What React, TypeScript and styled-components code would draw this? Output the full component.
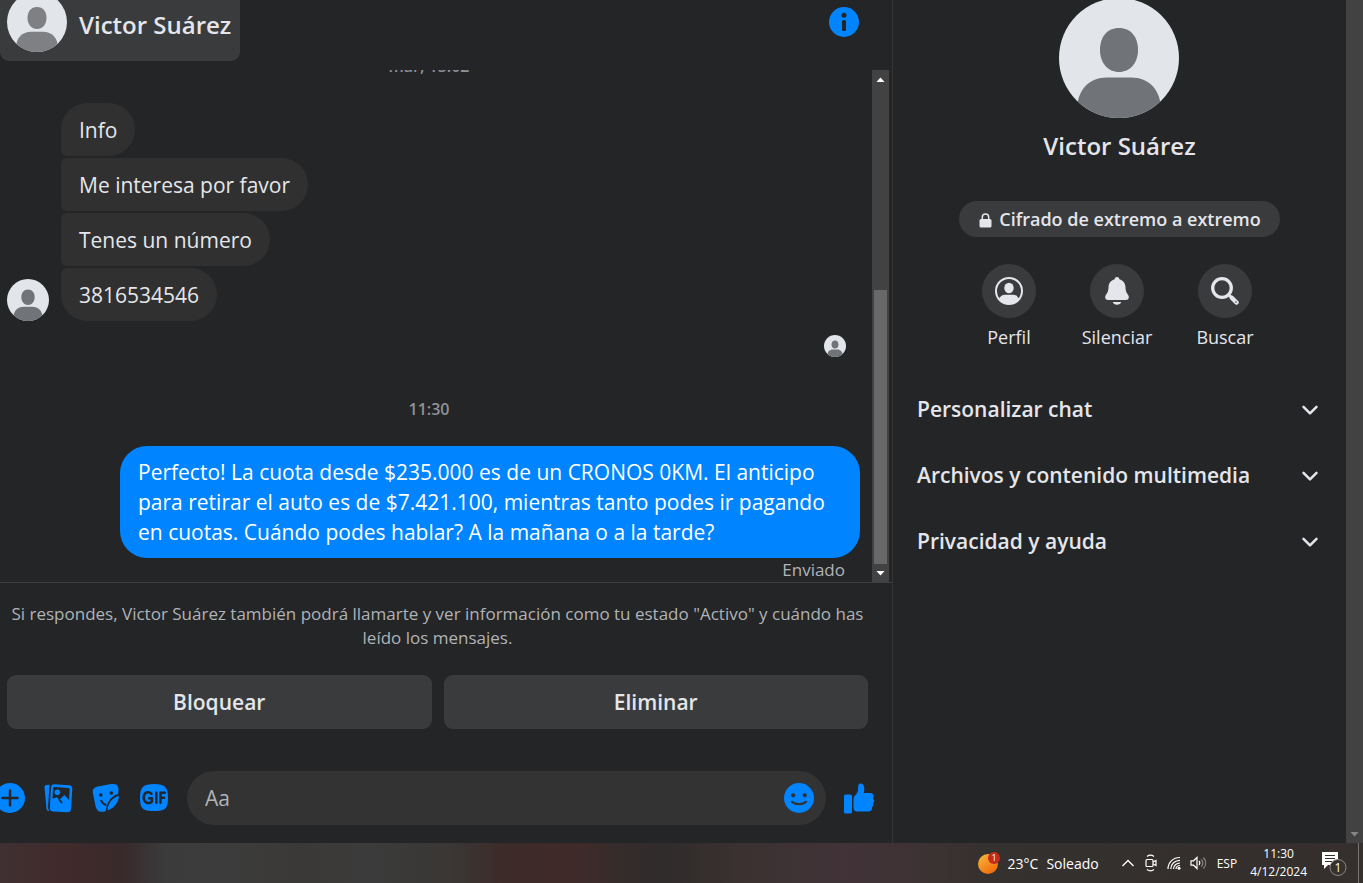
import React from "react";
import styled, { createGlobalStyle } from "styled-components";

const Global = createGlobalStyle`
  *, *::before, *::after { box-sizing: border-box; }
  html, body, #root { height: 100%; }
  body {
    margin: 0;
    background: #242526;
    color: #e4e6eb;
    font-family: "Open Sans", "Noto Sans", sans-serif;
    overflow: hidden;
  }
  button { font: inherit; color: inherit; border: 0; background: none; padding: 0; cursor: pointer; }
  h1, h2, p, ul { margin: 0; padding: 0; }
  ul { list-style: none; }
  svg { display: block; flex: none; }
`;

const Screen = styled.div`
  display: flex;
  flex-direction: column;
  min-height: 100vh;
`;

const Workspace = styled.div`
  display: flex;
  flex: 1;
  min-height: 0;
`;

const Chat = styled.main`
  display: flex;
  flex-direction: column;
  flex: 1;
  min-width: 0;
  border-right: 1px solid #323436;
`;

const ChatHeader = styled.header`
  display: flex;
  align-items: flex-start;
  justify-content: space-between;
  height: 70px;
  padding-right: 33px;
  overflow: hidden;
`;

const Contact = styled.button`
  display: flex;
  align-items: flex-start;
  gap: 12px;
  height: 61px;
  padding: 0 9px 0 7px;
  border-radius: 0 0 9px 9px;
  background: #3a3b3c;
`;

const ContactAvatar = styled.span`
  margin-top: -8px;
`;

const ContactName = styled.h1`
  font-size: 24px;
  line-height: 50px;
  font-weight: 600;
`;

const InfoButton = styled.button`
  margin-top: 7px;
`;

const MessageArea = styled.section`
  display: flex;
  flex: 1 1 0;
  min-height: 0;
  padding-right: 3px;
`;

const Messages = styled.div`
  display: flex;
  flex-direction: column;
  justify-content: flex-end;
  flex: 1;
  min-width: 0;
  overflow: hidden;
  padding-right: 12px;
`;

const Stamp = styled.time`
  flex: none;
  padding-right: 2px;
  text-align: center;
  font-size: 16px;
  line-height: 24px;
  font-weight: 600;
  color: #8f9297;
`;

const Incoming = styled.div`
  display: flex;
  flex: none;
  align-items: flex-end;
  gap: 12px;
  margin-top: 25px;
  padding-left: 7px;
`;

const BubbleList = styled.ul`
  display: flex;
  flex-direction: column;
  align-items: flex-start;
  gap: 2px;
`;

const Bubble = styled.li`
  padding: 12px 18px 11px;
  border-radius: 6px 27px 27px 6px;
  background: #303030;
  font-size: 21px;
  line-height: 30px;

  &:first-child { border-top-left-radius: 27px; }
  &:last-child { border-bottom-left-radius: 27px; }
`;

const Seen = styled.div`
  display: flex;
  flex: none;
  justify-content: flex-end;
  margin: 14px 14px 40px 0;
`;

const OwnBubble = styled.p`
  flex: none;
  align-self: flex-end;
  max-width: 740px;
  margin-top: 25px;
  padding: 11px 18px;
  border-radius: 27px;
  background: #0084ff;
  color: #fff;
  font-size: 21px;
  line-height: 30px;
`;

const Status = styled.p`
  flex: none;
  padding-right: 15px;
  text-align: right;
  font-size: 17px;
  line-height: 24px;
  color: #b0b3b8;
`;

const Track = styled.div`
  display: flex;
  flex-direction: column;
  align-items: center;
  width: 17px;
  background: #424242;
`;

const TrackEnd = styled.span`
  display: flex;
  flex: none;
  align-items: center;
  justify-content: center;
  width: 17px;
  height: 18px;
`;

const Thumb = styled.span`
  width: 13px;
  height: 274px;
  margin-top: auto;
  background: #686868;
`;

const RequestBar = styled.section`
  padding: 19px 24px 18px 7px;
  border-top: 1px solid #3e4042;
`;

const Notice = styled.p`
  text-align: center;
  font-size: 17px;
  line-height: 24px;
  color: #b0b3b8;
`;

const Choices = styled.div`
  display: flex;
  gap: 12px;
  margin-top: 25px;
`;

const Choice = styled.button`
  flex: 1;
  height: 54px;
  border-radius: 9px;
  background: #3a3b3c;
  font-size: 21px;
  font-weight: 600;
`;

const Composer = styled.form`
  display: flex;
  align-items: center;
  gap: 18px;
  height: 54px;
  margin: 42px -7px 0 -12px;
`;

const Tools = styled.div`
  display: flex;
  gap: 18px;
`;

const Field = styled.div`
  display: flex;
  flex: 1;
  align-items: center;
  min-width: 0;
  height: 54px;
  padding: 0 12px 0 18px;
  border-radius: 27px;
  background: #333334;
`;

const MessageInput = styled.input`
  flex: 1;
  min-width: 0;
  padding: 0;
  border: 0;
  outline: 0;
  background: transparent;
  color: #e4e6eb;
  font: inherit;
  font-size: 21px;
  &::placeholder { color: #b0b3b8; opacity: 1; }
`;

const Details = styled.aside`
  display: flex;
  flex-direction: column;
  align-items: center;
  width: 453px;
`;

const ProfileAvatar = styled.div`
  margin: -2px 2px 0 0;
`;

const ProfileName = styled.h2`
  margin-top: 11px;
  font-size: 24px;
  line-height: 34px;
  font-weight: 600;
`;

const Encryption = styled.button`
  display: flex;
  align-items: center;
  gap: 7px;
  height: 36px;
  margin-top: 38px;
  padding: 0 19px 0 20px;
  border-radius: 18px;
  background: #3a3b3c;
  font-size: 18px;
  font-weight: 600;
`;

const Actions = styled.div`
  display: flex;
  margin: 27px 5px 0 0;
`;

const Action = styled.button`
  display: flex;
  flex-direction: column;
  align-items: center;
  gap: 5px;
  width: 108px;
  font-size: 18px;
  line-height: 28px;
`;

const ActionDisc = styled.span`
  display: flex;
  align-items: center;
  justify-content: center;
  width: 54px;
  height: 54px;
  border-radius: 50%;
  background: #3a3b3c;
`;

const Sections = styled.div`
  align-self: stretch;
  margin-top: 25px;
  padding: 0 27px 0 24px;
`;

const Section = styled.button`
  display: flex;
  align-items: center;
  justify-content: space-between;
  width: 100%;
  height: 66px;
  font-size: 21px;
  font-weight: 600;
`;

const PageTrack = styled.div`
  display: flex;
  flex-direction: column;
  justify-content: flex-end;
  width: 17px;
  background: #424242;
`;

const Taskbar = styled.footer`
  display: flex;
  align-items: center;
  justify-content: flex-end;
  flex: none;
  height: 40px;
  color: #fff;
  font-size: 14px;
  background: linear-gradient(
    90deg,
    #403031 0%, #402a2c 5%, #38292a 9%, #3b3b3c 12%, #3c3c3c 16%, #3b3937 22%, #3b3b3b 27%,
    #3a3735 33%, #3c2b29 37%, #402a29 42%, #332c2b 46%, #2f2c2b 49%, #3a3130 54%, #413338 62%,
    #3d3233 68%, #35312e 72%, #34302e 82%, #352f2d 100%
  );
`;

const Weather = styled.button`
  display: flex;
  align-items: center;
  gap: 8px;
  margin-right: 22px;
`;

const Tray = styled.div`
  display: flex;
  align-items: center;
  gap: 9px;
`;

const Language = styled.button`
  margin-left: 10px;
  font-size: 12px;
`;

const Clock = styled.time`
  margin: 0 15px 0 13px;
  text-align: center;
  font-size: 12px;
  line-height: 18px;
`;

const Desktop = styled.span`
  width: 1px;
  height: 40px;
  margin: 0 4px 0 11px;
  background: #77736f;
`;

function Avatar({ size, figure = "#707377" }: { size: number; figure?: string }) {
  return (
    <svg width={size} height={size} viewBox="0 0 60 60" aria-hidden="true">
      <defs>
        <clipPath id={`face${size}`}><circle cx="30" cy="30" r="30" /></clipPath>
      </defs>
      <g clipPath={`url(#face${size})`}>
        <rect width="60" height="60" fill="#e2e5ea" />
        <path d="M30 15c6 0 9.500 4.500 9.500 11S35.500 37 30 37s-9.500-4.500-9.500-11S24 15 30 15Z" fill={figure} />
        <path d="M9 56c0-10 6-16.300 15-16.300h12c9 0 15 6.300 15 16.300v4H9Z" fill={figure} />
      </g>
    </svg>
  );
}

const Arrow = ({ up, color = "#fff" }: { up?: boolean; color?: string }) => (
  <svg width="9" height="5" viewBox="0 0 9 5" aria-hidden="true">
    <path d={up ? "M0.500 5 4.500 0.500 8.500 5Z" : "M0.500 0 4.500 4.500 8.500 0Z"} fill={color} />
  </svg>
);

const Chevron = () => (
  <svg width="18" height="18" viewBox="0 0 18 18" fill="none" stroke="#e4e6eb" strokeWidth="2.500" strokeLinecap="round" strokeLinejoin="round" aria-hidden="true">
    <path d="m2.500 6.800 6.500 6.500L15.500 6.800" />
  </svg>
);

const InfoIcon = () => (
  <svg width="30" height="30" viewBox="0 0 30 30" aria-hidden="true">
    <circle cx="15" cy="15" r="15" fill="#0084ff" />
    <circle cx="15" cy="8.200" r="2.500" fill="#242526" />
    <rect x="13" y="13" width="4" height="11" rx="1.500" fill="#242526" />
  </svg>
);

const PlusIcon = () => (
  <svg width="30" height="30" viewBox="0 0 30 30" aria-hidden="true">
    <circle cx="15" cy="15" r="15" fill="#0084ff" />
    <path d="M15 7.500v15M7.500 15h15" stroke="#242526" strokeWidth="2.500" strokeLinecap="round" />
  </svg>
);

const PhotosIcon = () => (
  <svg width="30" height="30" viewBox="0 0 30 30" aria-hidden="true">
    <path d="M6.500 1.600 3.500 1.900C2 2.100 1.300 3 1.500 4.500l2 21.300c.2 1.600 1.100 2.300 2.700 2.200h.3C5.500 27 5 25.500 5.100 23.800Z" fill="#0084ff" />
    <path d="M11.500 1.200 26 2.300c2.300.2 3.500 1.500 3.300 3.800l-1.300 20c-.2 2.300-1.500 3.400-3.800 3.200L10 28.400c-2.300-.2-3.400-1.500-3.200-3.800l1.200-20C8.200 2.200 9.400 1.100 11.500 1.200Z" fill="#0084ff" />
    <path d="m9.500 15.400.6-9.900c.1-1 .6-1.500 1.600-1.400l13.600.9c1 .1 1.500.6 1.400 1.600L26.100 17l-3.700-4.100c-.6-.7-1.200-.7-1.800-.1l-4.200 4-2-2c-.6-.6-1.200-.6-1.800 0Z" fill="#242526" />
    <path d="m16.400 16.800 2.200 2.700" stroke="#242526" strokeWidth="1.800" strokeLinecap="round" />
    <circle cx="14.400" cy="9.300" r="2.800" fill="#0084ff" />
  </svg>
);

const StickerIcon = () => (
  <svg width="30" height="30" viewBox="0 0 30 30" aria-hidden="true">
    <path d="M7 3.500 20 1.100c5-.8 7.500 1.200 7.500 5 0 1.500-.1 3.200-.4 5C22.500 12.500 19 15.500 16.800 20c-1.100 2.400-1.700 5-1.900 7.900-2.400 1.300-6.600 1.100-8.400-.700-1.200-1.300-1.800-3.200-2.300-5.700L1.800 9.500C1.200 6 3.500 4 7 3.500Z" fill="#0084ff" />
    <path d="M28 12.700c-.2 3.800-1.700 7.300-4.200 10-2 2.100-4.400 3.600-7.200 4.700.2-7.200 4.400-12.700 11.400-14.700Z" fill="#0084ff" />
    <circle cx="9.800" cy="12" r="1.800" fill="#242526" />
    <circle cx="20.300" cy="10" r="1.800" fill="#242526" />
    <path d="M10.200 17.700c1 2.200 2.300 3.500 4.500 4" fill="none" stroke="#242526" strokeWidth="2" strokeLinecap="round" />
  </svg>
);

const GifIcon = () => (
  <svg width="30" height="30" viewBox="0 0 30 30" aria-hidden="true">
    <path d="M15 1c11 0 14 3 14 14s-3 13-14 13S1 26 1 15 4 1 15 1Z" fill="#0084ff" />
    <g fill="none" stroke="#242526" strokeWidth="2.500" strokeLinecap="round" strokeLinejoin="round">
      <path d="M12.500 10.700C8.800 7.500 4.700 10 4.700 14.500c0 5 4.800 7 8.200 4.200v-3.500h-2.700" />
      <path d="M17.300 9.700v10M21.500 19.700v-10h4.300M21.500 14.700h3.600" />
    </g>
  </svg>
);

const SmileIcon = () => (
  <svg width="30" height="30" viewBox="0 0 30 30" aria-hidden="true">
    <circle cx="15" cy="15" r="15" fill="#0084ff" />
    <circle cx="9.200" cy="12.300" r="2.100" fill="#333334" />
    <circle cx="20.800" cy="12.300" r="2.100" fill="#333334" />
    <path d="M8 18.800c4 3.200 10 3.200 14 0" fill="none" stroke="#333334" strokeWidth="2.200" strokeLinecap="round" />
  </svg>
);

const LikeIcon = () => (
  <svg width="31" height="31" viewBox="0 0 31 31" aria-hidden="true">
    <rect x="0" y="11.500" width="8" height="19" rx="1.500" fill="#0084ff" />
    <path d="M9.500 16c0-1.500.6-2.600 1.600-3.600 2.800-2.800 3-4.500 3-8.400C14.100 1.700 15 .500 16.700.500c2.300 0 3.600 2 3.600 5 0 1.700-.2 3.200-.6 4.600h6.600c2.200 0 3.400 1.400 3.400 3.200 0 1-.4 1.700-.8 2.100.8.500 1.300 1.200 1.300 2.300s-.5 1.900-1.300 2.400c.3.500.5 1 .5 1.600 0 1.200-.7 2-1.700 2.500.200.400.300.800.300 1.300 0 1.900-1.500 3-3.600 3H13c-2.100 0-3.500-1.300-3.500-3.400Z" fill="#0084ff" />
  </svg>
);

const LockIcon = () => (
  <svg width="13" height="18" viewBox="0 0 13 18" aria-hidden="true">
    <rect x="0.500" y="9" width="12" height="8.500" rx="1.500" fill="#e4e6eb" />
    <path d="M3.300 9.500V7.200a3.200 3.200 0 0 1 6.400 0v2.300" fill="none" stroke="#e4e6eb" strokeWidth="1.500" />
  </svg>
);

const PersonIcon = () => (
  <svg width="28" height="28" viewBox="0 0 28 28" aria-hidden="true">
    <circle cx="14" cy="14" r="13" fill="none" stroke="#e4e6eb" strokeWidth="2" />
    <ellipse cx="14" cy="11" rx="4.700" ry="5.300" fill="#e4e6eb" />
    <path d="M4 22.300c1-3 3-4.500 6-4.500h8c3 0 5 1.500 6 4.500A13 13 0 0 1 4 22.300Z" fill="#e4e6eb" />
  </svg>
);

const BellIcon = () => (
  <svg width="28" height="28" viewBox="0 0 28 28" aria-hidden="true">
    <path d="M14 0c1.500 0 2.200.9 2.300 2.200 4 1 6.100 4.100 6.200 8.300.1 3.500.9 5 2.200 6.800 1 1.300 1.200 2.200 1.100 3.200-.1 1.700-1.200 2.500-3 2.500H5.200c-1.800 0-2.900-.8-3-2.500-.1-1 .1-1.900 1.100-3.200 1.300-1.800 2.100-3.300 2.200-6.800.1-4.200 2.200-7.300 6.200-8.300C11.800.900 12.500 0 14 0ZM9.800 25h8.400c-.5 1.700-2 2.700-4.200 2.700S10.300 26.700 9.800 25Z" fill="#e4e6eb" />
  </svg>
);

const SearchIcon = () => (
  <svg width="28" height="28" viewBox="0 0 28 28" fill="none" stroke="#e4e6eb" strokeLinecap="round" aria-hidden="true">
    <circle cx="11" cy="11" r="9.300" strokeWidth="3.300" />
    <path d="m18.500 18.500 1.500 1.500" strokeWidth="3" />
    <path d="m21 21 4.500 4.500" strokeWidth="4.500" />
    <circle cx="25" cy="25" r="0.800" fill="#3a3b3c" stroke="none" />
  </svg>
);

const WeatherIcon = () => (
  <svg width="22" height="22" viewBox="0 0 22 22" aria-hidden="true">
    <defs>
      <linearGradient id="sun" x1="0" y1="0" x2="0.700" y2="1">
        <stop offset="0" stopColor="#f5bd3c" />
        <stop offset="1" stopColor="#f26a0a" />
      </linearGradient>
    </defs>
    <circle cx="10" cy="12" r="10" fill="url(#sun)" />
    <circle cx="16" cy="6" r="6" fill="#c42b1c" />
    <text x="16" y="9" textAnchor="middle" fontSize="9" fill="#fff">1</text>
  </svg>
);

const TrayUp = () => (
  <svg width="14" height="14" viewBox="0 0 14 14" fill="none" stroke="#fff" strokeWidth="1.300" aria-hidden="true">
    <path d="m1.500 10 5.500-5.500L12.500 10" />
  </svg>
);

const MeetIcon = () => (
  <svg width="14" height="18" viewBox="0 0 14 18" fill="none" stroke="#fff" strokeWidth="1.200" aria-hidden="true">
    <rect x="2" y="5.500" width="7" height="7" rx="1" />
    <path d="m9 8 3-1.500v5L9 10M3 2.500c2-1.500 5-1.500 7 0M3 15.500c2 1.500 5 1.500 7 0" />
  </svg>
);

const WifiIcon = () => (
  <svg width="14" height="14" viewBox="0 0 14 14" fill="none" stroke="#fff" strokeWidth="1.200" aria-hidden="true">
    <path d="M1 13C1 6.500 6 1.500 13 1.500M3.800 13C3.800 8 8 4.300 13 4.300M6.500 13c0-3.500 3-6 6.500-6M9 13c0-2 2-3.500 4-3.500" />
    <circle cx="12" cy="12.300" r="1.500" fill="#fff" stroke="none" />
  </svg>
);

const SoundIcon = () => (
  <svg width="17" height="14" viewBox="0 0 17 14" fill="none" stroke="#fff" strokeWidth="1.200" aria-hidden="true">
    <path d="M1 4.800h2.500L7 1.500v11L3.500 9.200H1Z" />
    <path d="M9 5c1 1.200 1 2.800 0 4" />
    <path d="M11.200 3.300c2 2.200 2 5.200 0 7.400M13.400 1.500c3 3.300 3 7.700 0 11" stroke="#8b8886" />
  </svg>
);

const NotesIcon = () => (
  <svg width="25" height="25" viewBox="0 0 25 25" aria-hidden="true">
    <path d="M0 1h16v13H6l-4 4v-4H0Z" fill="#fff" />
    <path d="M3 4.500h10M3 7.500h10M3 10.500h7" stroke="#352f2d" strokeWidth="1.200" />
    <circle cx="16" cy="16.500" r="8" fill="#35312f" stroke="#8d8987" />
    <text x="16" y="21" textAnchor="middle" fontSize="12" fill="#fff">1</text>
  </svg>
);

const incoming = ["Info", "Me interesa por favor", "Tenes un número", "3816534546"];
const tools = [
  { label: "Más acciones", Icon: PlusIcon },
  { label: "Adjuntar foto", Icon: PhotosIcon },
  { label: "Elegir sticker", Icon: StickerIcon },
  { label: "Elegir GIF", Icon: GifIcon },
];
const actions = [
  { label: "Perfil", Icon: PersonIcon },
  { label: "Silenciar", Icon: BellIcon },
  { label: "Buscar", Icon: SearchIcon },
];
const sections = ["Personalizar chat", "Archivos y contenido multimedia", "Privacidad y ayuda"];

export default function App() {
  return (
    <Screen>
      <Global />
      <Workspace>
        <Chat>
          <ChatHeader>
            <Contact>
              <ContactAvatar><Avatar size={60} figure="#7f8083" /></ContactAvatar>
              <ContactName>Victor Suárez</ContactName>
            </Contact>
            <InfoButton aria-label="Información del chat"><InfoIcon /></InfoButton>
          </ChatHeader>
          <MessageArea>
            <Messages>
              <Stamp>mar, 13:02</Stamp>
              <Incoming>
                <Avatar size={42} />
                <BubbleList>
                  {incoming.map((text) => <Bubble key={text}>{text}</Bubble>)}
                </BubbleList>
              </Incoming>
              <Seen><Avatar size={22} /></Seen>
              <Stamp>11:30</Stamp>
              <OwnBubble>
                Perfecto! La cuota desde $235.000 es de un CRONOS 0KM. El anticipo para retirar el auto es
                de $7.421.100, mientras tanto podes ir pagando en cuotas. Cuándo podes hablar? A la mañana
                o a la tarde?
              </OwnBubble>
              <Status>Enviado</Status>
            </Messages>
            <Track>
              <TrackEnd><Arrow up /></TrackEnd>
              <Thumb />
              <TrackEnd><Arrow /></TrackEnd>
            </Track>
          </MessageArea>
          <RequestBar>
            <Notice>
              Si respondes, Victor Suárez también podrá llamarte y ver información como tu estado
              "Activo" y cuándo has leído los mensajes.
            </Notice>
            <Choices>
              <Choice>Bloquear</Choice>
              <Choice>Eliminar</Choice>
            </Choices>
            <Composer>
              <Tools>
                {tools.map(({ label, Icon }) => (
                  <button type="button" key={label} aria-label={label}><Icon /></button>
                ))}
              </Tools>
              <Field>
                <MessageInput placeholder="Aa" aria-label="Mensaje" />
                <button type="button" aria-label="Elegir emoji"><SmileIcon /></button>
              </Field>
              <button type="button" aria-label="Enviar me gusta"><LikeIcon /></button>
            </Composer>
          </RequestBar>
        </Chat>
        <Details>
          <ProfileAvatar><Avatar size={120} /></ProfileAvatar>
          <ProfileName>Victor Suárez</ProfileName>
          <Encryption><LockIcon />Cifrado de extremo a extremo</Encryption>
          <Actions>
            {actions.map(({ label, Icon }) => (
              <Action key={label}>
                <ActionDisc><Icon /></ActionDisc>
                {label}
              </Action>
            ))}
          </Actions>
          <Sections>
            {sections.map((label) => (
              <Section key={label}>{label}<Chevron /></Section>
            ))}
          </Sections>
        </Details>
        <PageTrack>
          <TrackEnd><Arrow color="#868686" /></TrackEnd>
        </PageTrack>
      </Workspace>
      <Taskbar>
        <Weather><WeatherIcon /><span>23°C</span><span>Soleado</span></Weather>
        <Tray><TrayUp /><MeetIcon /><WifiIcon /><SoundIcon /></Tray>
        <Language>ESP</Language>
        <Clock>11:30<br />4/12/2024</Clock>
        <button aria-label="Notificaciones"><NotesIcon /></button>
        <Desktop />
      </Taskbar>
    </Screen>
  );
}
